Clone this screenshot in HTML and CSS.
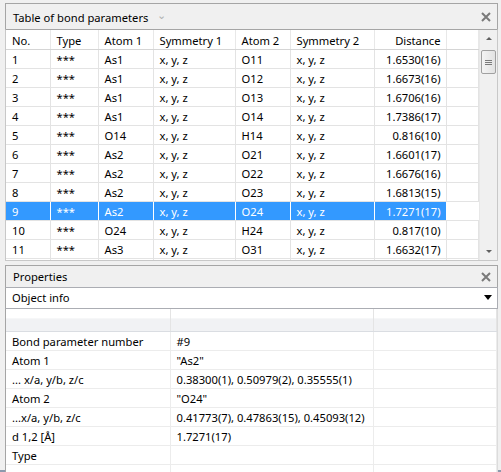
FILE: index.html
```html
<!DOCTYPE html>
<html lang="en">

<head>
    <meta charset="UTF-8">
    <title>Bond parameters</title>
    <link rel="stylesheet" href="styles.css">
</head>

<body>
    <div class="dock">
        <div class="panel bonds">
            <div class="panel-title">
                <span>Table of bond parameters</span>
                <span class="title-menu">&#8964;</span>
                <svg class="close" width="10" height="10" viewBox="0 0 10 10">
                    <path d="M1 1l8 8M9 1l-8 8" stroke="#7a7a7a" stroke-width="2" />
                </svg>
            </div>
            <div class="grid-area">
                <div class="grid-view">
                    <table class="bond-table">
                        <colgroup>
                            <col style="width:44px"><col style="width:48px"><col style="width:55px"><col style="width:82px">
                            <col style="width:55px"><col style="width:84px"><col style="width:72px"><col>
                        </colgroup>
                        <thead>
                            <tr>
                                <th>No.</th><th>Type</th><th>Atom 1</th><th>Symmetry 1</th>
                                <th>Atom 2</th><th>Symmetry 2</th><th class="num">Distance</th><th></th>
                            </tr>
                        </thead>
                        <tbody>
                            <tr><td>1</td><td>***</td><td>As1</td><td>x, y, z</td><td>O11</td><td>x, y, z</td><td class="num">1.6530(16)</td><td></td></tr>
                            <tr><td>2</td><td>***</td><td>As1</td><td>x, y, z</td><td>O12</td><td>x, y, z</td><td class="num">1.6673(16)</td><td></td></tr>
                            <tr><td>3</td><td>***</td><td>As1</td><td>x, y, z</td><td>O13</td><td>x, y, z</td><td class="num">1.6706(16)</td><td></td></tr>
                            <tr><td>4</td><td>***</td><td>As1</td><td>x, y, z</td><td>O14</td><td>x, y, z</td><td class="num">1.7386(17)</td><td></td></tr>
                            <tr><td>5</td><td>***</td><td>O14</td><td>x, y, z</td><td>H14</td><td>x, y, z</td><td class="num">0.816(10)</td><td></td></tr>
                            <tr><td>6</td><td>***</td><td>As2</td><td>x, y, z</td><td>O21</td><td>x, y, z</td><td class="num">1.6601(17)</td><td></td></tr>
                            <tr><td>7</td><td>***</td><td>As2</td><td>x, y, z</td><td>O22</td><td>x, y, z</td><td class="num">1.6676(16)</td><td></td></tr>
                            <tr><td>8</td><td>***</td><td>As2</td><td>x, y, z</td><td>O23</td><td>x, y, z</td><td class="num">1.6813(15)</td><td></td></tr>
                            <tr class="selected"><td>9</td><td>***</td><td>As2</td><td>x, y, z</td><td>O24</td><td>x, y, z</td><td class="num">1.7271(17)</td><td class="blank"></td></tr>
                            <tr><td>10</td><td>***</td><td>O24</td><td>x, y, z</td><td>H24</td><td>x, y, z</td><td class="num">0.817(10)</td><td></td></tr>
                            <tr><td>11</td><td>***</td><td>As3</td><td>x, y, z</td><td>O31</td><td>x, y, z</td><td class="num">1.6632(17)</td><td></td></tr>
                            <tr><td></td><td></td><td></td><td></td><td></td><td></td><td></td><td></td></tr>
                        </tbody>
                    </table>
                </div>
                <div class="scrollbar">
                    <div class="arrow up"></div>
                    <div class="track">
                        <div class="thumb"><span></span><span></span><span></span></div>
                    </div>
                    <div class="arrow down"></div>
                </div>
            </div>
        </div>

        <div class="panel props">
            <div class="panel-title">
                <span>Properties</span>
                <svg class="close" width="10" height="10" viewBox="0 0 10 10">
                    <path d="M1 1l8 8M9 1l-8 8" stroke="#7a7a7a" stroke-width="2" />
                </svg>
            </div>
            <div class="combo">
                <span>Object info</span>
                <svg width="8" height="5" viewBox="0 0 8 5"><path d="M0 0h8l-4 5z" fill="#000" /></svg>
            </div>
            <div class="prop-area">
                <table class="prop-table">
                    <colgroup>
                        <col style="width:164px"><col style="width:203px"><col>
                    </colgroup>
                    <thead>
                        <tr><th></th><th></th><th></th></tr>
                    </thead>
                    <tbody>
                        <tr><td>Bond parameter number</td><td>#9</td><td></td></tr>
                        <tr><td>Atom 1</td><td>"As2"</td><td></td></tr>
                        <tr><td>... x/a, y/b, z/c</td><td>0.38300(1), 0.50979(2), 0.35555(1)</td><td></td></tr>
                        <tr><td>Atom 2</td><td>"O24"</td><td></td></tr>
                        <tr><td>...x/a, y/b, z/c</td><td>0.41773(7), 0.47863(15), 0.45093(12)</td><td></td></tr>
                        <tr><td>d 1,2 [&Aring;]</td><td>1.7271(17)</td><td></td></tr>
                        <tr><td>Type</td><td></td><td></td></tr>
                        <tr><td></td><td></td><td></td></tr>
                    </tbody>
                </table>
            </div>
        </div>
    </div>
</body>

</html>
```

FILE: styles.css
```css
:root {
  --line: #e3e3e3;
  --frame: #a5a5a5;
  --select: #3399ff;
}
html,
body {
  margin: 0;
  padding: 0;
  height: 100%;
}
body {
  background-color: #f0f0f0;
  font-family: "Segoe UI", "Noto Sans", sans-serif;
  font-size: 11.2px;
  color: #000;
  overflow: hidden;
}
.dock {
  display: flex;
  flex-direction: column;
  row-gap: 4px;
  padding: 3px 3px 0 5px;
  height: 472px;
  box-sizing: border-box;
  border-bottom: 2px solid #8c9aae;
}
.panel {
  display: flex;
  flex-direction: column;
}
.panel-title {
  display: flex;
  align-items: center;
  height: 26px;
  padding: 1px 6px 0 7px;
  border: 1px solid var(--frame);
  border-bottom: none;
  background-color: #f0f0f0;
  box-sizing: border-box;
}
.panel-title .title-menu {
  margin: -6px 0 0 9px;
  color: #b0b0b0;
  font-size: 11px;
}
.panel-title .close {
  margin-left: auto;
}
/* bond table */
.grid-area {
  display: flex;
  height: 230px;
  border: 1px solid #c8c8c8;
  border-top-color: var(--frame);
  background-color: #fff;
}
.grid-view {
  flex: 1;
  overflow: hidden;
}
.bond-table,
.prop-table {
  width: 100%;
  border-collapse: collapse;
  table-layout: fixed;
}
.bond-table th,
.bond-table td {
  height: 16px;
  padding: 2px 0 0 6px;
  border-right: 1px solid var(--line);
  border-bottom: 1px solid var(--line);
  text-align: left;
  font-weight: normal;
  white-space: nowrap;
  line-height: 16px;
}
.bond-table th {
  height: 17px;
  border-right-color: #e8e8e8;
  border-bottom-color: #d5d5d5;
}
.bond-table .num {
  text-align: right;
  padding-left: 0;
  padding-right: 5px;
}
.bond-table tr.selected td {
  background-color: var(--select);
  color: #fff;
  border-right-color: #fff;
}
.bond-table tr.selected td.blank {
  background-color: #fff;
}
.scrollbar {
  width: 17px;
  display: flex;
  flex-direction: column;
  background-color: #f0f0f0;
  border-left: 1px solid #e8e8e8;
}
.scrollbar .arrow {
  height: 17px;
  display: flex;
  align-items: center;
  justify-content: center;
}
.scrollbar .arrow::after {
  content: "";
  border-left: 3px solid transparent;
  border-right: 3px solid transparent;
}
.scrollbar .up::after {
  border-bottom: 3px solid #606060;
}
.scrollbar .down::after {
  border-top: 3px solid #606060;
}
.scrollbar .track {
  flex: 1;
  padding: 3px 1px;
}
.scrollbar .thumb {
  height: 22px;
  border: 1px solid #a0a0a0;
  border-radius: 2px;
  background: linear-gradient(to right, #f4f4f4, #e2e2e2);
  display: flex;
  flex-direction: column;
  align-items: center;
  justify-content: center;
  row-gap: 1px;
}
.scrollbar .thumb span {
  width: 7px;
  height: 1px;
  background-color: #7b7b7b;
}
/* properties */
.props {
  flex: 1;
}
.props .panel-title {
  height: 22px;
  padding-top: 0;
}
.combo {
  display: flex;
  align-items: center;
  justify-content: space-between;
  height: 22px;
  padding: 0 5px 1px 6px;
  border: 1px solid #abadb3;
  border-left-color: var(--frame);
  background-color: #fff;
  box-sizing: border-box;
}
.prop-area {
  flex: 1;
  overflow: hidden;
  background-color: #fff;
  border-left: 1px solid var(--frame);
  border-right: 1px solid #dcdcdc;
}
.prop-table th,
.prop-table td {
  height: 16px;
  padding: 2px 0 0 6px;
  border-right: 1px solid #ececec;
  border-bottom: 1px solid #ececec;
  text-align: left;
  white-space: nowrap;
  line-height: 16px;
}
.prop-table th {
  height: 22px;
  padding: 0;
  background: linear-gradient(to bottom, #fff 0%, #fff 40%, #f1f2f4 45%, #f1f2f4 100%);
  border-right-color: #e4e4e4;
  border-bottom-color: #dadde2;
}
```
